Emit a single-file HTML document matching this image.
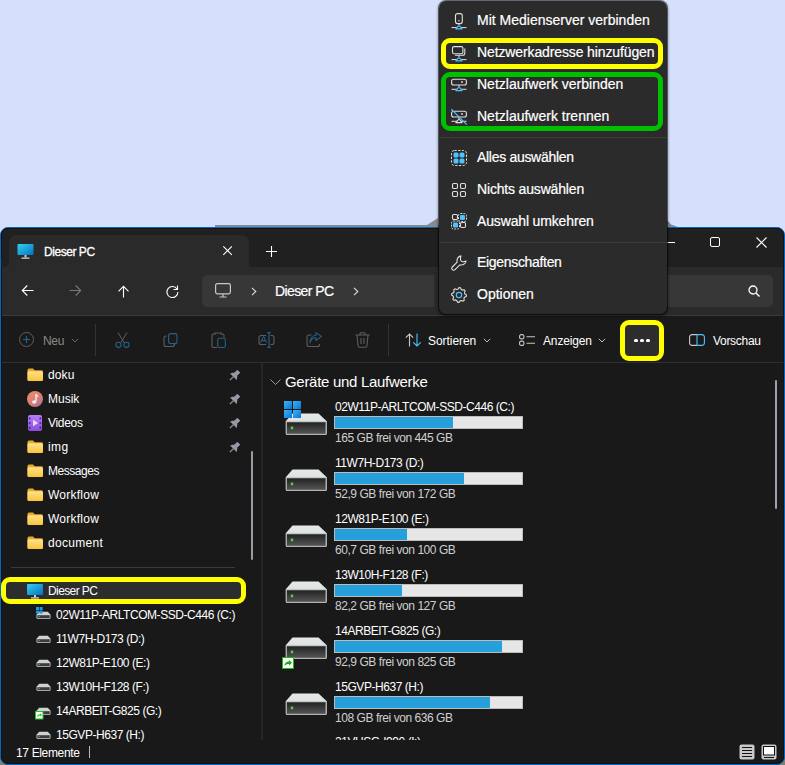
<!DOCTYPE html>
<html><head><meta charset="utf-8">
<style>
*{margin:0;padding:0;box-sizing:border-box}
html,body{width:785px;height:765px;overflow:hidden;background:#d6e0fc;font-family:"Liberation Sans",sans-serif;color:#fff;position:relative}
.a{position:absolute}
svg{position:absolute;overflow:visible}
.t12{position:absolute;font-size:12px;white-space:nowrap;line-height:14px}
.t14{position:absolute;font-size:14px;white-space:nowrap;line-height:16px;-webkit-text-stroke:0.2px currentColor}
</style></head><body>

<div class="a" style="left:0;top:752px;width:785px;height:13px;background:#7e8176"></div>
<div class="a" style="left:0;top:227px;width:785px;height:538px;border:1px solid #0068c4;border-radius:8px;background:#191919;overflow:hidden">
<div class="a" style="left:0;top:0;width:783px;height:39px;background:#202020"></div>
<div class="a" style="left:0;top:39px;width:783px;height:49px;background:#2a2a2a;border-bottom:1px solid #3a3a3a"></div>
<div class="a" style="left:0;top:88px;width:783px;height:47px;background:#1a1a1a;border-bottom:1px solid #2e2e2e"></div>
<div class="a" style="left:0;top:0;width:783px;height:536px;border:1px solid #15100c;border-radius:7px"></div>
</div>
<div class="a" style="left:215px;top:225px;width:224px;height:2px;background:#8a8a8a"></div>
<svg style="left:427px;top:218px" width="12" height="9"><path d="M0 7L11 0V9H0Z" fill="#8a8a8a"/></svg>
<svg style="left:667px;top:220px" width="11" height="7"><path d="M0 0L4 4.5L11 7H0Z" fill="#858585"/></svg>
<div class="a" style="left:9px;top:235px;width:240px;height:33px;background:#2a2a2a;border-radius:8px 8px 0 0"></div>
<div class="a" style="left:249px;top:262px;width:5px;height:5px;background:#2a2a2a"></div>
<div class="a" style="left:4px;top:262px;width:5px;height:5px;background:#2a2a2a"></div>
<div class="a" style="left:1px;top:258px;width:8px;height:9px;background:#202020;border-bottom-right-radius:4px"></div>
<div class="a" style="left:249px;top:258px;width:8px;height:9px;background:#202020;border-bottom-left-radius:4px"></div>
<svg style="left:17px;top:244px" width="17" height="16" viewBox="0 0 17 16"><defs><linearGradient id="mg" x1="0" y1="0" x2="1" y2="1"><stop offset="0" stop-color="#2fd3ef"/><stop offset="1" stop-color="#0a6fc2"/></linearGradient></defs><rect x="0.5" y="0" width="16" height="11" rx="1" fill="url(#mg)"/><rect x="7.5" y="11" width="2" height="2.5" fill="#c8c8c8"/><rect x="4.5" y="13.5" width="8" height="1.3" fill="#d0d0d0"/></svg>
<div class="t12" style="left:44px;top:245px;color:#fff;letter-spacing:-0.45px;-webkit-text-stroke:0.3px #fff">Dieser PC</div>
<svg style="left:223px;top:246px" width="9" height="9" viewBox="0 0 9 9"><path d="M0.3 0.3L8.9 8.9M8.9 0.3L0.3 8.9" stroke="#fff" stroke-width="1.1"/></svg>
<svg style="left:266px;top:246px" width="11" height="11" viewBox="0 0 11 11"><path d="M5.5 0V11M0 5.5H11" stroke="#fff" stroke-width="1.1"/></svg>
<svg style="left:664px;top:242px" width="11" height="1" viewBox="0 0 11 1"><path d="M0 0.5H11" stroke="#fff" stroke-width="1"/></svg>
<svg style="left:710px;top:237px" width="11" height="11" viewBox="0 0 11 11"><rect x="0.5" y="0.5" width="9" height="9" rx="1.5" fill="none" stroke="#fff" stroke-width="1"/></svg>
<svg style="left:756px;top:237px" width="11" height="11" viewBox="0 0 11 11"><path d="M0.5 0.5L10.5 10.5M10.5 0.5L0.5 10.5" stroke="#fff" stroke-width="1.1"/></svg>
<svg style="left:21px;top:285px" width="13" height="12" viewBox="0 0 13 12"><path d="M12.5 5.5H1.3M6.3 0.5L1.3 5.5L6.3 10.5" fill="none" stroke="#fff" stroke-width="1.1"/></svg>
<svg style="left:69px;top:285px" width="13" height="12" viewBox="0 0 13 12"><path d="M0.5 5.5H11.7M6.7 0.5L11.7 5.5L6.7 10.5" fill="none" stroke="#777" stroke-width="1.1"/></svg>
<svg style="left:118px;top:285px" width="12" height="13" viewBox="0 0 12 13"><path d="M5.5 12.5V1.3M0.5 6.3L5.5 1.3L10.5 6.3" fill="none" stroke="#fff" stroke-width="1.1"/></svg>
<svg style="left:166px;top:285px" width="13" height="13" viewBox="0 0 13 13"><path d="M11 4A5.5 5.5 0 1 0 11.9 7" fill="none" stroke="#fff" stroke-width="1.1"/><path d="M11.5 0.5V4.5H7.5" fill="none" stroke="#fff" stroke-width="1.1"/></svg>
<div class="a" style="left:202px;top:275px;width:232px;height:32px;background:#373737;border-radius:5px 0 0 5px"></div>
<svg style="left:215px;top:283px" width="16" height="15" viewBox="0 0 16 15"><rect x="0.6" y="0.6" width="14.8" height="10.3" rx="1.8" fill="none" stroke="#c8c8c8" stroke-width="1.2"/><path d="M8 11V13.5M4.5 14H11.5" stroke="#c8c8c8" stroke-width="1.2"/></svg>
<svg style="left:251px;top:287px" width="6" height="9" viewBox="0 0 6 9"><path d="M1 0.8L4.8 4.5L1 8.2" fill="none" stroke="#ddd" stroke-width="1.1"/></svg>
<div class="t14" style="left:275px;top:283px;color:#fff;letter-spacing:-0.6px;">Dieser PC</div>
<svg style="left:353px;top:287px" width="6" height="9" viewBox="0 0 6 9"><path d="M1 0.8L4.8 4.5L1 8.2" fill="none" stroke="#ddd" stroke-width="1.1"/></svg>
<div class="a" style="left:560px;top:275px;width:213px;height:32px;background:#373737;border-radius:5px"></div>
<svg style="left:748px;top:285px" width="12" height="12" viewBox="0 0 12 12"><circle cx="5" cy="5" r="4" fill="none" stroke="#fff" stroke-width="1.3"/><path d="M8 8L11.5 11.5" stroke="#fff" stroke-width="1.4"/></svg>
<svg style="left:19px;top:332px" width="15" height="15" viewBox="0 0 15 15"><circle cx="7.5" cy="7.5" r="7" fill="none" stroke="#5e5e5e" stroke-width="1"/><path d="M7.5 4V11M4 7.5H11" stroke="#25628a" stroke-width="1.2"/></svg>
<div class="t12" style="left:43px;top:334px;color:#8a8a84;letter-spacing:-0.3px;">Neu</div>
<svg style="left:71px;top:338px" width="8" height="5" viewBox="0 0 8 5"><path d="M0.8 0.8L4 4L7.2 0.8" fill="none" stroke="#666" stroke-width="1"/></svg>
<div class="a" style="left:95px;top:324px;width:1px;height:32px;background:#333"></div>
<svg style="left:115px;top:332px" width="15" height="16" viewBox="0 0 15 16"><path d="M3 0.5L9 10.5M12 0.5L6 10.5" stroke="#5e5e5e" stroke-width="1"/><circle cx="3.5" cy="12.8" r="2.6" fill="none" stroke="#25628a" stroke-width="1.1"/><circle cx="11.5" cy="12.8" r="2.6" fill="none" stroke="#25628a" stroke-width="1.1"/></svg>
<svg style="left:163px;top:333px" width="15" height="14" viewBox="0 0 15 14"><path d="M3.5 3H3A2 2 0 0 0 1 5V11.5A2 2 0 0 0 3 13.5H9.5A2 2 0 0 0 11.5 11.5V11" fill="none" stroke="#5e5e5e" stroke-width="1.1"/><rect x="5.6" y="0.6" width="8.4" height="10" rx="2" fill="none" stroke="#25628a" stroke-width="1.1"/></svg>
<svg style="left:211px;top:332px" width="15" height="16" viewBox="0 0 15 16"><path d="M4 2H2.5A1.5 1.5 0 0 0 1 3.5V14A1.5 1.5 0 0 0 2.5 15.5H6" fill="none" stroke="#5e5e5e" stroke-width="1.1"/><path d="M4 2.8V1H10V2.8M10 2H11.5A1.5 1.5 0 0 1 13 3.5V5.5" fill="none" stroke="#5e5e5e" stroke-width="1.1"/><rect x="6.8" y="6.2" width="7.5" height="9.3" rx="1.5" fill="none" stroke="#25628a" stroke-width="1.1"/></svg>
<svg style="left:258px;top:332px" width="16" height="16" viewBox="0 0 16 16"><path d="M8 3.5H3A2 2 0 0 0 1 5.5V10.5A2 2 0 0 0 3 12.5H8M12.5 3.5H14A2 2 0 0 1 16 5.5V10.5A2 2 0 0 1 14 12.5H12.5" fill="none" stroke="#5e5e5e" stroke-width="1.1"/><path d="M11 0.6V15.4M9.3 0.6H12.7M9.3 15.4H12.7" stroke="#25628a" stroke-width="1.1"/><path d="M2.6 10.8L5.6 4.2L8.6 10.8M3.7 8.5H7.5" fill="none" stroke="#25628a" stroke-width="1"/></svg>
<svg style="left:306px;top:332px" width="17" height="16" viewBox="0 0 17 16"><path d="M5.5 3H3A2 2 0 0 0 1 5V12.5A2 2 0 0 0 3 14.5H11.5A2 2 0 0 0 13.5 12.5V12" fill="none" stroke="#5e5e5e" stroke-width="1.1"/><path d="M4 11C4.5 7.5 7 5.8 10 5.8V8.6L15.4 4.4L10 0.6V3.3C6.5 3.5 4 6.5 4 11Z" fill="none" stroke="#25628a" stroke-width="1.1" stroke-linejoin="round"/></svg>
<svg style="left:355px;top:332px" width="15" height="16" viewBox="0 0 15 16"><path d="M0.5 3H14.5M5 3V1.5A1 1 0 0 1 6 0.8H9A1 1 0 0 1 10 1.5V3M2 3L3 13.5A2 2 0 0 0 5 15.3H10A2 2 0 0 0 12 13.5L13 3M6 6V12M9 6V12" fill="none" stroke="#5e5e5e" stroke-width="1.1"/></svg>
<div class="a" style="left:388px;top:324px;width:1px;height:32px;background:#333"></div>
<svg style="left:405px;top:333px" width="17" height="14" viewBox="0 0 17 14"><path d="M4.5 13.5V1M0.8 4.7L4.5 1L8.2 4.7" fill="none" stroke="#c8c8c8" stroke-width="1.1"/><path d="M12 0.5V13M8.3 9.3L12 13L15.7 9.3" fill="none" stroke="#4cc2ff" stroke-width="1.1"/></svg>
<div class="t12" style="left:428px;top:334px;color:#fff;letter-spacing:-0.05px;">Sortieren</div>
<svg style="left:483px;top:338px" width="8" height="5" viewBox="0 0 8 5"><path d="M0.8 0.8L4 4L7.2 0.8" fill="none" stroke="#bbb" stroke-width="1"/></svg>
<svg style="left:519px;top:334px" width="16" height="12" viewBox="0 0 16 12"><rect x="0.6" y="0.6" width="4.3" height="4.3" rx="1.5" fill="none" stroke="#c8c8c8" stroke-width="1.1"/><rect x="0.6" y="7.1" width="4.3" height="4.3" rx="1.5" fill="none" stroke="#c8c8c8" stroke-width="1.1"/><path d="M7.5 2.8H16M7.5 9.3H16" stroke="#c8c8c8" stroke-width="1.1"/></svg>
<div class="t12" style="left:543px;top:334px;color:#fff;letter-spacing:-0.15px;">Anzeigen</div>
<svg style="left:598px;top:338px" width="8" height="5" viewBox="0 0 8 5"><path d="M0.8 0.8L4 4L7.2 0.8" fill="none" stroke="#bbb" stroke-width="1"/></svg>
<div class="a" style="left:620px;top:320px;width:44px;height:41px;border:5px solid #ffff00;border-radius:9px;background:#2d2d2d"></div>
<div class="a" style="left:634px;top:339px;width:4px;height:3px;background:#fff;border-radius:1.5px 1.5px 1px 1px"></div>
<div class="a" style="left:640px;top:339px;width:4px;height:3px;background:#fff;border-radius:1.5px 1.5px 1px 1px"></div>
<div class="a" style="left:646px;top:339px;width:4px;height:3px;background:#fff;border-radius:1.5px 1.5px 1px 1px"></div>
<svg style="left:689px;top:334px" width="16" height="12" viewBox="0 0 16 12"><path d="M8 0.6H3A2.4 2.4 0 0 0 0.6 3V9A2.4 2.4 0 0 0 3 11.4H8" fill="none" stroke="#c8c8c8" stroke-width="1.1"/><path d="M8 0.6H13A2.4 2.4 0 0 1 15.4 3V9A2.4 2.4 0 0 1 13 11.4H8V0.6" fill="none" stroke="#4cc2ff" stroke-width="1.1"/></svg>
<div class="t12" style="left:713px;top:334px;color:#fff;letter-spacing:-0.3px;">Vorschau</div>
<div class="a" style="left:261px;top:363px;width:2px;height:377px;background:#262626"></div>
<svg width="0" height="0" style="position:absolute"><defs><linearGradient id="fg" x1="0" y1="0" x2="0" y2="1"><stop offset="0" stop-color="#ffe28a"/><stop offset="1" stop-color="#f8c43c"/></linearGradient></defs></svg>
<svg style="left:27px;top:368px" width="16" height="13" viewBox="0 0 16 13"><path d="M0.5 2A1.5 1.5 0 0 1 2 0.5H6L7.8 2.3H14.5A1.5 1.5 0 0 1 16 3.8V11.5A1.5 1.5 0 0 1 14.5 13H2A1.5 1.5 0 0 1 0.5 11.5Z" fill="#e8a92a"/><path d="M0.5 4A1.5 1.5 0 0 1 2 3.3H14.5A1.5 1.5 0 0 1 16 4.8V11.5A1.5 1.5 0 0 1 14.5 13H2A1.5 1.5 0 0 1 0.5 11.5Z" fill="url(#fg)"/></svg>
<div class="t12" style="left:48px;top:368px;color:#fff;letter-spacing:0.1px;">doku</div>
<svg style="left:229px;top:370px" width="11" height="11" viewBox="0 0 11 11"><g transform="rotate(45 5.5 5.5)" fill="#9a9aa6"><rect x="3.4" y="-0.6" width="4.2" height="5" rx="0.6"/><path d="M0.9 7.2H10.1L8.3 4.2H2.7Z"/><rect x="4.9" y="7" width="1.2" height="5"/></g></svg>
<svg style="left:27px;top:391px" width="16" height="16" viewBox="0 0 16 16"><defs><linearGradient id="mu" x1="0.3" y1="0.2" x2="0.9" y2="1"><stop offset="0" stop-color="#e8876c"/><stop offset="0.6" stop-color="#d07a7a"/><stop offset="1" stop-color="#9a72b8"/></linearGradient></defs><circle cx="8" cy="8" r="8" fill="url(#mu)"/><path d="M9 3.2V10.5" stroke="#f4eeee" stroke-width="1.4"/><ellipse cx="7.2" cy="11" rx="2.1" ry="1.7" fill="#f4eeee"/><path d="M9 3.2C9.8 4.3 10.8 4.8 10.9 6" stroke="#f4eeee" stroke-width="1.2" fill="none"/></svg>
<div class="t12" style="left:48px;top:392px;color:#fff;letter-spacing:0px;">Musik</div>
<svg style="left:229px;top:394px" width="11" height="11" viewBox="0 0 11 11"><g transform="rotate(45 5.5 5.5)" fill="#9a9aa6"><rect x="3.4" y="-0.6" width="4.2" height="5" rx="0.6"/><path d="M0.9 7.2H10.1L8.3 4.2H2.7Z"/><rect x="4.9" y="7" width="1.2" height="5"/></g></svg>
<svg style="left:28px;top:415px" width="14" height="16" viewBox="0 0 14 16"><defs><linearGradient id="vg" x1="0" y1="0" x2="0" y2="1"><stop offset="0" stop-color="#b77cf4"/><stop offset="1" stop-color="#8a4ee0"/></linearGradient></defs><rect x="0" y="0" width="14" height="16" rx="2" fill="url(#vg)"/><path d="M5 4.8L10.2 8L5 11.2Z" fill="#e6ddf5"/><g fill="#3c1a70"><rect x="0.9" y="2.6" width="1.6" height="1.6" rx="0.5"/><rect x="0.9" y="7.2" width="1.6" height="1.6" rx="0.5"/><rect x="0.9" y="11.8" width="1.6" height="1.6" rx="0.5"/><rect x="11.5" y="2.6" width="1.6" height="1.6" rx="0.5"/><rect x="11.5" y="7.2" width="1.6" height="1.6" rx="0.5"/><rect x="11.5" y="11.8" width="1.6" height="1.6" rx="0.5"/></g></svg>
<div class="t12" style="left:48px;top:416px;color:#fff;letter-spacing:-0.3px;">Videos</div>
<svg style="left:229px;top:418px" width="11" height="11" viewBox="0 0 11 11"><g transform="rotate(45 5.5 5.5)" fill="#9a9aa6"><rect x="3.4" y="-0.6" width="4.2" height="5" rx="0.6"/><path d="M0.9 7.2H10.1L8.3 4.2H2.7Z"/><rect x="4.9" y="7" width="1.2" height="5"/></g></svg>
<svg style="left:27px;top:440px" width="16" height="13" viewBox="0 0 16 13"><path d="M0.5 2A1.5 1.5 0 0 1 2 0.5H6L7.8 2.3H14.5A1.5 1.5 0 0 1 16 3.8V11.5A1.5 1.5 0 0 1 14.5 13H2A1.5 1.5 0 0 1 0.5 11.5Z" fill="#e8a92a"/><path d="M0.5 4A1.5 1.5 0 0 1 2 3.3H14.5A1.5 1.5 0 0 1 16 4.8V11.5A1.5 1.5 0 0 1 14.5 13H2A1.5 1.5 0 0 1 0.5 11.5Z" fill="url(#fg)"/></svg>
<div class="t12" style="left:48px;top:440px;color:#fff;letter-spacing:0.4px;">img</div>
<svg style="left:229px;top:442px" width="11" height="11" viewBox="0 0 11 11"><g transform="rotate(45 5.5 5.5)" fill="#9a9aa6"><rect x="3.4" y="-0.6" width="4.2" height="5" rx="0.6"/><path d="M0.9 7.2H10.1L8.3 4.2H2.7Z"/><rect x="4.9" y="7" width="1.2" height="5"/></g></svg>
<svg style="left:27px;top:464px" width="16" height="13" viewBox="0 0 16 13"><path d="M0.5 2A1.5 1.5 0 0 1 2 0.5H6L7.8 2.3H14.5A1.5 1.5 0 0 1 16 3.8V11.5A1.5 1.5 0 0 1 14.5 13H2A1.5 1.5 0 0 1 0.5 11.5Z" fill="#e8a92a"/><path d="M0.5 4A1.5 1.5 0 0 1 2 3.3H14.5A1.5 1.5 0 0 1 16 4.8V11.5A1.5 1.5 0 0 1 14.5 13H2A1.5 1.5 0 0 1 0.5 11.5Z" fill="url(#fg)"/></svg>
<div class="t12" style="left:48px;top:464px;color:#fff;letter-spacing:-0.45px;">Messages</div>
<svg style="left:27px;top:488px" width="16" height="13" viewBox="0 0 16 13"><path d="M0.5 2A1.5 1.5 0 0 1 2 0.5H6L7.8 2.3H14.5A1.5 1.5 0 0 1 16 3.8V11.5A1.5 1.5 0 0 1 14.5 13H2A1.5 1.5 0 0 1 0.5 11.5Z" fill="#e8a92a"/><path d="M0.5 4A1.5 1.5 0 0 1 2 3.3H14.5A1.5 1.5 0 0 1 16 4.8V11.5A1.5 1.5 0 0 1 14.5 13H2A1.5 1.5 0 0 1 0.5 11.5Z" fill="url(#fg)"/></svg>
<div class="t12" style="left:48px;top:488px;color:#fff;letter-spacing:0.25px;">Workflow</div>
<svg style="left:27px;top:512px" width="16" height="13" viewBox="0 0 16 13"><path d="M0.5 2A1.5 1.5 0 0 1 2 0.5H6L7.8 2.3H14.5A1.5 1.5 0 0 1 16 3.8V11.5A1.5 1.5 0 0 1 14.5 13H2A1.5 1.5 0 0 1 0.5 11.5Z" fill="#e8a92a"/><path d="M0.5 4A1.5 1.5 0 0 1 2 3.3H14.5A1.5 1.5 0 0 1 16 4.8V11.5A1.5 1.5 0 0 1 14.5 13H2A1.5 1.5 0 0 1 0.5 11.5Z" fill="url(#fg)"/></svg>
<div class="t12" style="left:48px;top:512px;color:#fff;letter-spacing:0.25px;">Workflow</div>
<svg style="left:27px;top:536px" width="16" height="13" viewBox="0 0 16 13"><path d="M0.5 2A1.5 1.5 0 0 1 2 0.5H6L7.8 2.3H14.5A1.5 1.5 0 0 1 16 3.8V11.5A1.5 1.5 0 0 1 14.5 13H2A1.5 1.5 0 0 1 0.5 11.5Z" fill="#e8a92a"/><path d="M0.5 4A1.5 1.5 0 0 1 2 3.3H14.5A1.5 1.5 0 0 1 16 4.8V11.5A1.5 1.5 0 0 1 14.5 13H2A1.5 1.5 0 0 1 0.5 11.5Z" fill="url(#fg)"/></svg>
<div class="t12" style="left:48px;top:536px;color:#fff;letter-spacing:0.3px;">document</div>
<div class="a" style="left:251px;top:451px;width:2px;height:109px;background:#9a9aa4;border-radius:1px"></div>
<div class="a" style="left:11px;top:567px;width:224px;height:1px;background:#3a3a3a"></div>
<div class="a" style="left:1px;top:577px;width:245px;height:27px;border:5px solid #ffff00;border-radius:9px;background:#2d2d2d"></div>
<svg style="left:27px;top:584px" width="16" height="15" viewBox="0 0 16 15"><rect x="0" y="0" width="16" height="11" rx="1" fill="url(#mg)"/><rect x="7" y="11" width="2" height="2.5" fill="#c8c8c8"/><rect x="4" y="13.3" width="8" height="1.3" fill="#d0d0d0"/></svg>
<div class="t12" style="left:48px;top:584px;color:#fff;letter-spacing:-0.6px;">Dieser PC</div>
<svg style="left:36px;top:611px" width="15" height="8" viewBox="0 0 15 8"><path d="M3.2 0.8H11.8L14.5 3.8V7A0.8 0.8 0 0 1 13.7 7.8H1.3A0.8 0.8 0 0 1 0.5 7V3.8Z" fill="#cfd2d2"/><rect x="1.3" y="4.2" width="12.4" height="2.8" fill="#3c3c3c"/><rect x="2.6" y="5.1" width="1.2" height="1" fill="#35c835"/></svg>
<svg style="left:36px;top:607px" width="7" height="7" viewBox="0 0 7 7"><g fill="#1e9be8"><rect x="0" y="0" width="3" height="3"/><rect x="3.6" y="0" width="3" height="3"/><rect x="0" y="3.6" width="3" height="3"/><rect x="3.6" y="3.6" width="3" height="3"/></g></svg>
<div class="t12" style="left:56px;top:608px;color:#fff;letter-spacing:-0.45px;">02W11P-ARLTCOM-SSD-C446 (C:)</div>
<svg style="left:36px;top:635px" width="15" height="8" viewBox="0 0 15 8"><path d="M3.2 0.8H11.8L14.5 3.8V7A0.8 0.8 0 0 1 13.7 7.8H1.3A0.8 0.8 0 0 1 0.5 7V3.8Z" fill="#cfd2d2"/><rect x="1.3" y="4.2" width="12.4" height="2.8" fill="#3c3c3c"/><rect x="2.6" y="5.1" width="1.2" height="1" fill="#35c835"/></svg>
<div class="t12" style="left:56px;top:632px;color:#fff;letter-spacing:-0.45px;">11W7H-D173 (D:)</div>
<svg style="left:36px;top:659px" width="15" height="8" viewBox="0 0 15 8"><path d="M3.2 0.8H11.8L14.5 3.8V7A0.8 0.8 0 0 1 13.7 7.8H1.3A0.8 0.8 0 0 1 0.5 7V3.8Z" fill="#cfd2d2"/><rect x="1.3" y="4.2" width="12.4" height="2.8" fill="#3c3c3c"/><rect x="2.6" y="5.1" width="1.2" height="1" fill="#35c835"/></svg>
<div class="t12" style="left:56px;top:656px;color:#fff;letter-spacing:-0.45px;">12W81P-E100 (E:)</div>
<svg style="left:36px;top:683px" width="15" height="8" viewBox="0 0 15 8"><path d="M3.2 0.8H11.8L14.5 3.8V7A0.8 0.8 0 0 1 13.7 7.8H1.3A0.8 0.8 0 0 1 0.5 7V3.8Z" fill="#cfd2d2"/><rect x="1.3" y="4.2" width="12.4" height="2.8" fill="#3c3c3c"/><rect x="2.6" y="5.1" width="1.2" height="1" fill="#35c835"/></svg>
<div class="t12" style="left:56px;top:680px;color:#fff;letter-spacing:-0.45px;">13W10H-F128 (F:)</div>
<svg style="left:36px;top:707px" width="15" height="8" viewBox="0 0 15 8"><path d="M3.2 0.8H11.8L14.5 3.8V7A0.8 0.8 0 0 1 13.7 7.8H1.3A0.8 0.8 0 0 1 0.5 7V3.8Z" fill="#cfd2d2"/><rect x="1.3" y="4.2" width="12.4" height="2.8" fill="#3c3c3c"/><rect x="2.6" y="5.1" width="1.2" height="1" fill="#35c835"/></svg>
<svg style="left:35px;top:711px" width="8" height="8" viewBox="0 0 8 8"><rect x="0.5" y="0.5" width="7.5" height="7.5" fill="#f4fff4" stroke="#22c022" stroke-width="1"/><path d="M2 6.2C2 4.2 3.5 3.2 5.3 3.2V2.2L7 3.9L5.3 5.6V4.6C4 4.6 3 5.2 2 6.2Z" fill="#33b833"/></svg>
<div class="t12" style="left:56px;top:704px;color:#fff;letter-spacing:-0.45px;">14ARBEIT-G825 (G:)</div>
<svg style="left:36px;top:731px" width="15" height="8" viewBox="0 0 15 8"><path d="M3.2 0.8H11.8L14.5 3.8V7A0.8 0.8 0 0 1 13.7 7.8H1.3A0.8 0.8 0 0 1 0.5 7V3.8Z" fill="#cfd2d2"/><rect x="1.3" y="4.2" width="12.4" height="2.8" fill="#3c3c3c"/><rect x="2.6" y="5.1" width="1.2" height="1" fill="#35c835"/></svg>
<div class="t12" style="left:56px;top:728px;color:#fff;letter-spacing:-0.45px;">15GVP-H637 (H:)</div>
<div class="t12" style="left:16px;top:746px;color:#fff;letter-spacing:-0.35px;">17 Elemente</div>
<div class="a" style="left:89px;top:746px;width:1px;height:12px;background:#bbb"></div>
<svg style="left:739px;top:744px" width="16" height="16" viewBox="0 0 16 16"><rect x="0.5" y="0.5" width="15" height="15" rx="2" fill="#c8c8c8"/><path d="M3 3.5H13M3 6.5H13M3 9.5H13M3 12.5H13" stroke="#111" stroke-width="1"/></svg>
<svg style="left:761px;top:744px" width="16" height="16" viewBox="0 0 16 16"><rect x="0.5" y="0.5" width="15" height="15" rx="2" fill="#c8c8c8"/><rect x="2.5" y="2.5" width="11" height="8.5" fill="#fff" stroke="#111" stroke-width="1"/><path d="M3 13.5H13" stroke="#111" stroke-width="1"/></svg>
<svg style="left:270px;top:379px" width="11" height="6" viewBox="0 0 11 6"><path d="M0.5 0.5L5.5 5.5L10.5 0.5" fill="none" stroke="#999" stroke-width="1"/></svg>
<div class="a" style="left:285px;top:373px;font-size:15px;line-height:17px;white-space:nowrap;letter-spacing:-0.3px">Geräte und Laufwerke</div>
<div class="a" style="left:775px;top:380px;width:2px;height:129px;background:#a0a0ac;border-radius:1px"></div>
<svg style="left:285px;top:413px" width="43" height="23" viewBox="0 0 43 23"><defs><linearGradient id="dk" x1="0" y1="0" x2="0" y2="1"><stop offset="0" stop-color="#222"/><stop offset="1" stop-color="#555"/></linearGradient><linearGradient id="tp" x1="0" y1="0" x2="0" y2="1"><stop offset="0" stop-color="#e6e9e9"/><stop offset="1" stop-color="#cfd3d3"/></linearGradient></defs><path d="M7.5 0.5H33.5L41.8 8.2V20.5A1.5 1.5 0 0 1 40.3 22H2.2A1.5 1.5 0 0 1 0.7 20.5V8.2Z" fill="url(#tp)"/><path d="M1 8.5H41.5V20.5A1.3 1.3 0 0 1 40.2 21.8H2.3A1.3 1.3 0 0 1 1 20.5Z" fill="#a9abab"/><rect x="2" y="9.3" width="38.5" height="11.5" fill="url(#dk)"/><circle cx="7" cy="15" r="1.4" fill="#3fd83f"/></svg>
<svg style="left:284px;top:401px" width="17" height="17" viewBox="0 0 17 17"><defs><linearGradient id="wl" x1="0" y1="0" x2="1" y2="1"><stop offset="0" stop-color="#3ab4f2"/><stop offset="1" stop-color="#0b74d4"/></linearGradient></defs><g fill="url(#wl)"><rect x="0" y="0" width="8" height="8"/><rect x="9" y="0" width="8" height="8"/><rect x="0" y="9" width="8" height="8"/><rect x="9" y="9" width="8" height="8"/></g></svg>
<div class="t12" style="left:335px;top:400px;color:#fff;letter-spacing:-0.45px;">02W11P-ARLTCOM-SSD-C446 (C:)</div>
<div class="a" style="left:334px;top:416px;width:189px;height:13px;background:#e6e6e6;border:1px solid #bcbcbc"></div>
<div class="a" style="left:335px;top:417px;width:118px;height:11px;background:#26a0da"></div>
<div class="t12" style="left:335px;top:431px;color:#d0d0d0;letter-spacing:-0.45px;">165 GB frei von 445 GB</div>
<svg style="left:285px;top:469px" width="43" height="23" viewBox="0 0 43 23"><defs><linearGradient id="dk" x1="0" y1="0" x2="0" y2="1"><stop offset="0" stop-color="#222"/><stop offset="1" stop-color="#555"/></linearGradient><linearGradient id="tp" x1="0" y1="0" x2="0" y2="1"><stop offset="0" stop-color="#e6e9e9"/><stop offset="1" stop-color="#cfd3d3"/></linearGradient></defs><path d="M7.5 0.5H33.5L41.8 8.2V20.5A1.5 1.5 0 0 1 40.3 22H2.2A1.5 1.5 0 0 1 0.7 20.5V8.2Z" fill="url(#tp)"/><path d="M1 8.5H41.5V20.5A1.3 1.3 0 0 1 40.2 21.8H2.3A1.3 1.3 0 0 1 1 20.5Z" fill="#a9abab"/><rect x="2" y="9.3" width="38.5" height="11.5" fill="url(#dk)"/><circle cx="7" cy="15" r="1.4" fill="#3fd83f"/></svg>
<div class="t12" style="left:335px;top:456px;color:#fff;letter-spacing:-0.45px;">11W7H-D173 (D:)</div>
<div class="a" style="left:334px;top:472px;width:189px;height:13px;background:#e6e6e6;border:1px solid #bcbcbc"></div>
<div class="a" style="left:335px;top:473px;width:129px;height:11px;background:#26a0da"></div>
<div class="t12" style="left:335px;top:487px;color:#d0d0d0;letter-spacing:-0.45px;">52,9 GB frei von 172 GB</div>
<svg style="left:285px;top:525px" width="43" height="23" viewBox="0 0 43 23"><defs><linearGradient id="dk" x1="0" y1="0" x2="0" y2="1"><stop offset="0" stop-color="#222"/><stop offset="1" stop-color="#555"/></linearGradient><linearGradient id="tp" x1="0" y1="0" x2="0" y2="1"><stop offset="0" stop-color="#e6e9e9"/><stop offset="1" stop-color="#cfd3d3"/></linearGradient></defs><path d="M7.5 0.5H33.5L41.8 8.2V20.5A1.5 1.5 0 0 1 40.3 22H2.2A1.5 1.5 0 0 1 0.7 20.5V8.2Z" fill="url(#tp)"/><path d="M1 8.5H41.5V20.5A1.3 1.3 0 0 1 40.2 21.8H2.3A1.3 1.3 0 0 1 1 20.5Z" fill="#a9abab"/><rect x="2" y="9.3" width="38.5" height="11.5" fill="url(#dk)"/><circle cx="7" cy="15" r="1.4" fill="#3fd83f"/></svg>
<div class="t12" style="left:335px;top:512px;color:#fff;letter-spacing:-0.45px;">12W81P-E100 (E:)</div>
<div class="a" style="left:334px;top:528px;width:189px;height:13px;background:#e6e6e6;border:1px solid #bcbcbc"></div>
<div class="a" style="left:335px;top:529px;width:72px;height:11px;background:#26a0da"></div>
<div class="t12" style="left:335px;top:543px;color:#d0d0d0;letter-spacing:-0.45px;">60,7 GB frei von 100 GB</div>
<svg style="left:285px;top:581px" width="43" height="23" viewBox="0 0 43 23"><defs><linearGradient id="dk" x1="0" y1="0" x2="0" y2="1"><stop offset="0" stop-color="#222"/><stop offset="1" stop-color="#555"/></linearGradient><linearGradient id="tp" x1="0" y1="0" x2="0" y2="1"><stop offset="0" stop-color="#e6e9e9"/><stop offset="1" stop-color="#cfd3d3"/></linearGradient></defs><path d="M7.5 0.5H33.5L41.8 8.2V20.5A1.5 1.5 0 0 1 40.3 22H2.2A1.5 1.5 0 0 1 0.7 20.5V8.2Z" fill="url(#tp)"/><path d="M1 8.5H41.5V20.5A1.3 1.3 0 0 1 40.2 21.8H2.3A1.3 1.3 0 0 1 1 20.5Z" fill="#a9abab"/><rect x="2" y="9.3" width="38.5" height="11.5" fill="url(#dk)"/><circle cx="7" cy="15" r="1.4" fill="#3fd83f"/></svg>
<div class="t12" style="left:335px;top:568px;color:#fff;letter-spacing:-0.45px;">13W10H-F128 (F:)</div>
<div class="a" style="left:334px;top:584px;width:189px;height:13px;background:#e6e6e6;border:1px solid #bcbcbc"></div>
<div class="a" style="left:335px;top:585px;width:67px;height:11px;background:#26a0da"></div>
<div class="t12" style="left:335px;top:599px;color:#d0d0d0;letter-spacing:-0.45px;">82,2 GB frei von 127 GB</div>
<svg style="left:285px;top:637px" width="43" height="23" viewBox="0 0 43 23"><defs><linearGradient id="dk" x1="0" y1="0" x2="0" y2="1"><stop offset="0" stop-color="#222"/><stop offset="1" stop-color="#555"/></linearGradient><linearGradient id="tp" x1="0" y1="0" x2="0" y2="1"><stop offset="0" stop-color="#e6e9e9"/><stop offset="1" stop-color="#cfd3d3"/></linearGradient></defs><path d="M7.5 0.5H33.5L41.8 8.2V20.5A1.5 1.5 0 0 1 40.3 22H2.2A1.5 1.5 0 0 1 0.7 20.5V8.2Z" fill="url(#tp)"/><path d="M1 8.5H41.5V20.5A1.3 1.3 0 0 1 40.2 21.8H2.3A1.3 1.3 0 0 1 1 20.5Z" fill="#a9abab"/><rect x="2" y="9.3" width="38.5" height="11.5" fill="url(#dk)"/><circle cx="7" cy="15" r="1.4" fill="#3fd83f"/></svg>
<svg style="left:282px;top:657px" width="12" height="12" viewBox="0 0 12 12"><rect x="0.5" y="0.5" width="11" height="11" fill="#f4fff4" stroke="#22b022" stroke-width="1"/><path d="M2.5 9C2.5 6 4.5 4.5 7 4.5V3L10 5.8L7 8.5V7C5 7 3.8 7.5 2.5 9Z" fill="#22a022"/></svg>
<div class="t12" style="left:335px;top:624px;color:#fff;letter-spacing:-0.45px;">14ARBEIT-G825 (G:)</div>
<div class="a" style="left:334px;top:640px;width:189px;height:13px;background:#e6e6e6;border:1px solid #bcbcbc"></div>
<div class="a" style="left:335px;top:641px;width:167px;height:11px;background:#26a0da"></div>
<div class="t12" style="left:335px;top:655px;color:#d0d0d0;letter-spacing:-0.45px;">92,9 GB frei von 825 GB</div>
<svg style="left:285px;top:693px" width="43" height="23" viewBox="0 0 43 23"><defs><linearGradient id="dk" x1="0" y1="0" x2="0" y2="1"><stop offset="0" stop-color="#222"/><stop offset="1" stop-color="#555"/></linearGradient><linearGradient id="tp" x1="0" y1="0" x2="0" y2="1"><stop offset="0" stop-color="#e6e9e9"/><stop offset="1" stop-color="#cfd3d3"/></linearGradient></defs><path d="M7.5 0.5H33.5L41.8 8.2V20.5A1.5 1.5 0 0 1 40.3 22H2.2A1.5 1.5 0 0 1 0.7 20.5V8.2Z" fill="url(#tp)"/><path d="M1 8.5H41.5V20.5A1.3 1.3 0 0 1 40.2 21.8H2.3A1.3 1.3 0 0 1 1 20.5Z" fill="#a9abab"/><rect x="2" y="9.3" width="38.5" height="11.5" fill="url(#dk)"/><circle cx="7" cy="15" r="1.4" fill="#3fd83f"/></svg>
<div class="t12" style="left:335px;top:680px;color:#fff;letter-spacing:-0.45px;">15GVP-H637 (H:)</div>
<div class="a" style="left:334px;top:696px;width:189px;height:13px;background:#e6e6e6;border:1px solid #bcbcbc"></div>
<div class="a" style="left:335px;top:697px;width:155px;height:11px;background:#26a0da"></div>
<div class="t12" style="left:335px;top:711px;color:#d0d0d0;letter-spacing:-0.45px;">108 GB frei von 636 GB</div>
<div class="a" style="left:335px;top:736px;width:200px;height:4px;overflow:hidden"><div class="t12" style="left:0;top:-1px;letter-spacing:-0.45px">21VHSG-I990 (I:)</div></div>
<div class="a" style="left:438px;top:0px;width:230px;height:315px;background:#2b2b2b;background-clip:padding-box;border:1px solid rgba(0,0,0,.5);border-radius:8px;box-shadow:0 2px 3px rgba(0,0,0,.4)"></div>
<svg style="left:451px;top:12px" width="16" height="18" viewBox="0 0 16 18"><rect x="4.5" y="1.6" width="6.8" height="10" rx="2" fill="none" stroke="#e0e0e0" stroke-width="1.1"/><circle cx="7.9" cy="8.8" r="0.8" fill="#e0e0e0"/><path d="M8 11.6V13" stroke="#e0e0e0" stroke-width="1"/><path d="M0.5 15.6H15.5" stroke="#e0e0e0" stroke-width="1"/><path d="M4.9 16.9L6.6 14.7Q8 13.0 9.4 14.7L11.1 16.9Z" fill="#2b2b2b" stroke="#4cc2ff" stroke-width="1.1" stroke-linejoin="round"/></svg>
<div class="t14" style="left:477px;top:12px;color:#fff;letter-spacing:0px;">Mit Medienserver verbinden</div>
<div class="a" style="left:441px;top:38px;width:222px;height:31px;border:5px solid #ffff00;border-radius:9px"></div>
<svg style="left:451px;top:45px" width="16" height="18" viewBox="0 0 16 18"><rect x="1.5" y="1.6" width="10.4" height="7.2" rx="1.5" fill="none" stroke="#e0e0e0" stroke-width="1.1"/><path d="M13.8 3.5V8.3A2 2 0 0 1 11.8 10.3H4" fill="none" stroke="#e0e0e0" stroke-width="1.1"/><path d="M8 10.3V12" stroke="#e0e0e0" stroke-width="1"/><path d="M0.5 14.6H15.5" stroke="#e0e0e0" stroke-width="1"/><path d="M4.9 15.9L6.6 13.7Q8 12.0 9.4 13.7L11.1 15.9Z" fill="#2b2b2b" stroke="#4cc2ff" stroke-width="1.1" stroke-linejoin="round"/></svg>
<div class="t14" style="left:477px;top:44px;color:#fff;letter-spacing:-0.12px;">Netzwerkadresse hinzufügen</div>
<div class="a" style="left:441px;top:72px;width:222px;height:59px;border:5px solid #00c000;border-radius:9px"></div>
<svg style="left:451px;top:78px" width="16" height="14" viewBox="0 0 16 14"><rect x="0.6" y="1.2" width="14.8" height="5.8" rx="2" fill="none" stroke="#e0e0e0" stroke-width="1.1"/><circle cx="11" cy="4" r="0.9" fill="#e0e0e0"/><path d="M8 7V9" stroke="#e0e0e0" stroke-width="1"/><path d="M0.5 11.3H15.5" stroke="#e0e0e0" stroke-width="1"/><path d="M4.9 12.600000000000001L6.6 10.4Q8 8.700000000000001 9.4 10.4L11.1 12.600000000000001Z" fill="#2b2b2b" stroke="#4cc2ff" stroke-width="1.1" stroke-linejoin="round"/></svg>
<div class="t14" style="left:477px;top:76px;color:#fff;letter-spacing:0px;">Netzlaufwerk verbinden</div>
<svg style="left:451px;top:109px" width="16" height="16" viewBox="0 0 16 16"><rect x="0.6" y="2.2" width="14.8" height="5.8" rx="2" fill="none" stroke="#e0e0e0" stroke-width="1.1"/><circle cx="11" cy="5" r="0.9" fill="#e0e0e0"/><path d="M8 8V10" stroke="#e0e0e0" stroke-width="1"/><path d="M0.5 12.3H15.5" stroke="#e0e0e0" stroke-width="1"/><path d="M4.9 13.600000000000001L6.6 11.4Q8 9.700000000000001 9.4 11.4L11.1 13.600000000000001Z" fill="#2b2b2b" stroke="#e0e0e0" stroke-width="1.1" stroke-linejoin="round"/><path d="M0.3 0.3L15.8 15.6" stroke="#4cc2ff" stroke-width="1.2"/></svg>
<div class="t14" style="left:477px;top:108px;color:#fff;letter-spacing:0px;">Netzlaufwerk trennen</div>
<div class="a" style="left:439px;top:137px;width:228px;height:1px;background:#3b3b3b"></div>
<svg style="left:451px;top:150px" width="16" height="16" viewBox="0 0 16 16"><rect x="0.5" y="0.5" width="15" height="15" rx="3" fill="none" stroke="#e0e0e0" stroke-width="1" stroke-dasharray="2.2 1.5"/><rect x="2.5" y="2.5" width="5" height="5" rx="1.5" fill="#4cc2ff"/><rect x="8.5" y="2.5" width="5" height="5" rx="1.5" fill="#4cc2ff"/><rect x="2.5" y="8.5" width="5" height="5" rx="1.5" fill="#4cc2ff"/><rect x="8.5" y="8.5" width="5" height="5" rx="1.5" fill="#4cc2ff"/></svg>
<div class="t14" style="left:477px;top:149px;color:#fff;letter-spacing:-0.3px;">Alles auswählen</div>
<svg style="left:451px;top:182px" width="16" height="16" viewBox="0 0 16 16"><rect x="1.5" y="1.5" width="5" height="5" rx="1.2" fill="none" stroke="#e0e0e0" stroke-width="1.1"/><rect x="9.5" y="1.5" width="5" height="5" rx="1.2" fill="none" stroke="#e0e0e0" stroke-width="1.1"/><rect x="1.5" y="9.5" width="5" height="5" rx="1.2" fill="none" stroke="#e0e0e0" stroke-width="1.1"/><rect x="9.5" y="9.5" width="5" height="5" rx="1.2" fill="none" stroke="#e0e0e0" stroke-width="1.1"/></svg>
<div class="t14" style="left:477px;top:181px;color:#fff;letter-spacing:-0.17px;">Nichts auswählen</div>
<svg style="left:451px;top:213px" width="16" height="17" viewBox="0 0 16 17"><rect x="1.5" y="1.5" width="5" height="5" rx="1.2" fill="none" stroke="#e0e0e0" stroke-width="1.1"/><rect x="7.5" y="0.5" width="8" height="8" rx="2" fill="none" stroke="#e0e0e0" stroke-width="1" stroke-dasharray="1.8 1.2"/><rect x="9" y="2" width="5" height="5" rx="1.3" fill="#4cc2ff"/><rect x="0.5" y="8" width="8" height="8" rx="2" fill="none" stroke="#e0e0e0" stroke-width="1" stroke-dasharray="1.8 1.2"/><rect x="2" y="9.5" width="5" height="5" rx="1.3" fill="#4cc2ff"/><rect x="9.5" y="9.5" width="5" height="5" rx="1.2" fill="none" stroke="#e0e0e0" stroke-width="1.1"/></svg>
<div class="t14" style="left:477px;top:213px;color:#fff;letter-spacing:-0.15px;">Auswahl umkehren</div>
<div class="a" style="left:439px;top:242px;width:228px;height:1px;background:#3b3b3b"></div>
<svg style="left:451px;top:255px" width="16" height="16" viewBox="0 0 16 16"><path d="M10 0.9A4.8 4.8 0 0 0 6.2 7.1L1.3 12A1.9 1.9 0 0 0 4 14.7L8.9 9.8A4.8 4.8 0 0 0 15.1 6L12.6 6.7Q10.4 7.2 9.6 5.1Q9.1 3.3 10 0.9Z" fill="none" stroke="#e0e0e0" stroke-width="1.1" stroke-linejoin="round"/></svg>
<div class="t14" style="left:477px;top:254px;color:#fff;letter-spacing:-0.32px;">Eigenschaften</div>
<svg style="left:451px;top:287px" width="16" height="16" viewBox="0 0 16 16"><path d="M8.00 0.60 L9.44 0.74 L10.26 2.55 L11.28 3.09 L13.23 2.77 L14.15 3.89 L13.45 5.74 L13.79 6.85 L15.40 8.00 L15.26 9.44 L13.45 10.26 L12.91 11.28 L13.23 13.23 L12.11 14.15 L10.26 13.45 L9.15 13.79 L8.00 15.40 L6.56 15.26 L5.74 13.45 L4.72 12.91 L2.77 13.23 L1.85 12.11 L2.55 10.26 L2.21 9.15 L0.60 8.00 L0.74 6.56 L2.55 5.74 L3.09 4.72 L2.77 2.77 L3.89 1.85 L5.74 2.55 L6.85 2.21Z" fill="none" stroke="#e0e0e0" stroke-width="1.1" stroke-linejoin="round"/><circle cx="8" cy="8" r="2.7" fill="none" stroke="#4cc2ff" stroke-width="1.15"/></svg>
<div class="t14" style="left:477px;top:286px;color:#fff;letter-spacing:0px;">Optionen</div>
</body></html>
